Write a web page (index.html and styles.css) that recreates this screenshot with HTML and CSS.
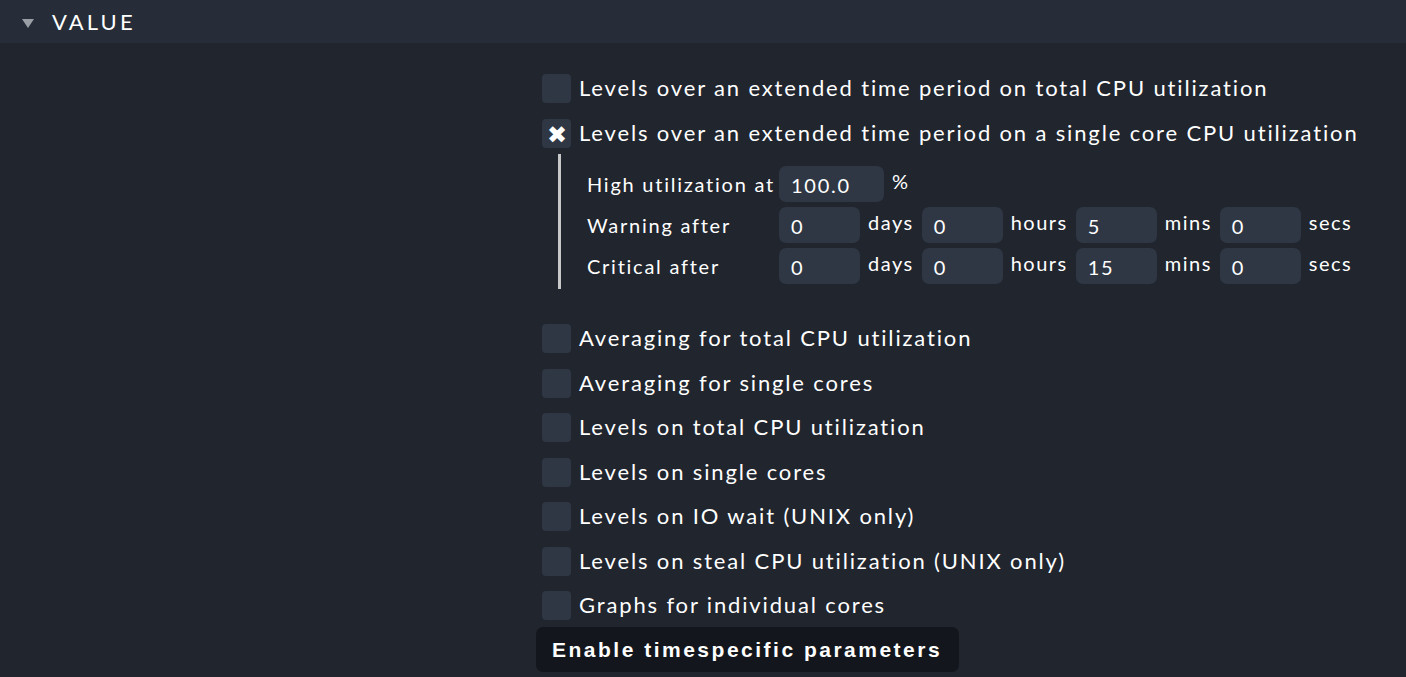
FILE: index.html
```html
<!DOCTYPE html>
<html>
<head>
<meta charset="utf-8">
<link rel="stylesheet" href="styles.css">
</head>
<body>
<div class="header">
  <span class="tri"></span>
  <span class="title">VALUE</span>
</div>
<div class="content">
  <div class="opt"><span class="cb"></span><span class="lbl">Levels over an extended time period on total CPU utilization</span></div>
  <div class="opt"><span class="cb checked">&#10006;</span><span class="lbl">Levels over an extended time period on a single core CPU utilization</span></div>
  <div class="nested">
    <div class="nrow">
      <span class="nlabel">High utilization at</span>
      <span class="inp wide">100.0</span>
      <span class="unit">%</span>
    </div>
    <div class="nrow">
      <span class="nlabel">Warning after</span>
      <span class="inp">0</span><span class="unit">days</span>
      <span class="inp">0</span><span class="unit">hours</span>
      <span class="inp">5</span><span class="unit">mins</span>
      <span class="inp">0</span><span class="unit">secs</span>
    </div>
    <div class="nrow">
      <span class="nlabel">Critical after</span>
      <span class="inp">0</span><span class="unit">days</span>
      <span class="inp">0</span><span class="unit">hours</span>
      <span class="inp">15</span><span class="unit">mins</span>
      <span class="inp">0</span><span class="unit">secs</span>
    </div>
  </div>
  <div class="group2">
    <div class="opt"><span class="cb"></span><span class="lbl">Averaging for total CPU utilization</span></div>
    <div class="opt"><span class="cb"></span><span class="lbl">Averaging for single cores</span></div>
    <div class="opt"><span class="cb"></span><span class="lbl">Levels on total CPU utilization</span></div>
    <div class="opt"><span class="cb"></span><span class="lbl">Levels on single cores</span></div>
    <div class="opt"><span class="cb"></span><span class="lbl">Levels on IO wait (UNIX only)</span></div>
    <div class="opt"><span class="cb"></span><span class="lbl">Levels on steal CPU utilization (UNIX only)</span></div>
    <div class="opt"><span class="cb"></span><span class="lbl">Graphs for individual cores</span></div>
  </div>
  <div class="btn">Enable timespecific parameters</div>
</div>
</body>
</html>
```
FILE: styles.css
```css
html, body {
  margin: 0;
  padding: 0;
  background: #20252e;
  color: #ffffff;
  font-family: Lato, "Noto Sans", sans-serif;
  overflow: hidden;
}
.header {
  height: 43px;
  background: #262d38;
  display: flex;
  align-items: center;
  padding-left: 22px;
  box-sizing: border-box;
}
.tri {
  width: 0;
  height: 0;
  border-left: 6px solid transparent;
  border-right: 6px solid transparent;
  border-top: 9px solid #9a9ea5;
  margin-top: 3px;
  margin-right: 18px;
}
.title {
  font-size: 22px;
  letter-spacing: 3.1px;
}
.content {
  padding-left: 542px;
  padding-top: 31px;
}
.opt {
  display: flex;
  align-items: center;
  height: 29px;
  margin-bottom: 16px;
}
.cb {
  width: 29px;
  height: 29px;
  border-radius: 4px;
  background: #2f3744;
  flex: none;
  margin-right: 8px;
  display: flex;
  align-items: center;
  justify-content: center;
  font-size: 24px;
  line-height: 1;
  color: #fff;
}
.lbl {
  font-size: 22px;
  letter-spacing: 1.85px;
  margin-top: -2px;
}
.nested {
  margin-left: 16px;
  margin-top: -10px;
  border-left: 3px solid #c8c8c8;
  padding: 12px 0 5px 26px;
  width: 800px;
}
.nrow {
  display: flex;
  align-items: center;
  height: 36px;
  margin-bottom: 5px;
  font-size: 20px;
  letter-spacing: 1.75px;
}
.nrow:last-child { margin-bottom: 0; }
.nlabel {
  width: 192px;
  flex: none;
  white-space: nowrap;
}
.inp {
  width: 81px;
  height: 36px;
  box-sizing: border-box;
  background: #2f3744;
  border-radius: 7px;
  padding-left: 12px;
  display: flex;
  align-items: center;
  padding-top: 2px;
  flex: none;
}
.inp.wide { width: 105px; }
.unit {
  margin: 0 8px;
  margin-top: -6px;
  letter-spacing: 1.5px;
}
.group2 {
  margin-top: 35px;
}
.group2 .opt {
  margin-bottom: 15.5px;
}
.btn {
  display: inline-block;
  margin-left: -6px;
  margin-top: -9px;
  background: #13171d;
  border-radius: 7px;
  height: 45px;
  line-height: 45px;
  padding: 0 17px 0 16px;
  font-family: "Liberation Sans", Arial, sans-serif;
  font-weight: bold;
  font-size: 21px;
  letter-spacing: 2.5px;
}
```
